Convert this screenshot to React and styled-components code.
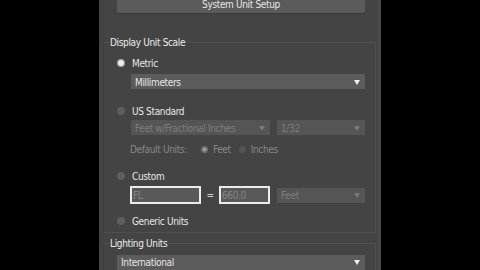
import React from "react";
import styled, { createGlobalStyle } from "styled-components";

const Global = createGlobalStyle`
  html, body { margin: 0; padding: 0; background: #000; }
  body { width: 480px; height: 270px; overflow: hidden; }
`;

const Panel = styled.div`
  margin-left: 99px;
  width: 278px;
  height: 270px;
  background: #444444;
  border-right: 4px solid #4a4a4a;
  font-family: "DejaVu Sans Condensed", "Liberation Sans", Arial, sans-serif;
  font-size: 10px;
  letter-spacing: -0.35px;
  color: #e6e6e6;
  overflow: hidden;
`;

const TopButton = styled.div`
  margin-left: 18px;
  width: 248px;
  height: 13px;
  background: #5b5b5b;
  border-radius: 0 0 2px 2px;
  box-shadow: 0 1px 0 #3a3a3a;
  display: flex;
  align-items: flex-start;
  justify-content: center;
  line-height: 9px;
  box-sizing: border-box;
`;

const Group = styled.fieldset`
  margin: ${(p) => p.$top}px 0 0 4px;
  width: 273px;
  box-sizing: border-box;
  border: 1px solid #4f4f4f;
  border-left-color: #3d3d3d;
  padding: 0 0 ${(p) => p.$bottom}px 13px;
  min-width: 0;
`;

const Legend = styled.legend`
  padding: 0 1px;
  margin-left: -8px;
  height: 12px;
  line-height: 13px;
  color: #ececec;
`;

const Row = styled.div`
  display: flex;
  align-items: center;
  height: ${(p) => p.$h || 12}px;
  margin-top: ${(p) => p.$top}px;
  padding-left: ${(p) => p.$indent || 0}px;
  gap: ${(p) => p.$gap || 0}px;
`;

const Radio = styled.span`
  width: ${(p) => (p.$small ? 7 : 8)}px;
  height: ${(p) => (p.$small ? 7 : 8)}px;
  border-radius: 50%;
  flex: none;
  box-sizing: border-box;
  background: ${(p) =>
    p.$on
      ? p.$dim
        ? "radial-gradient(circle, #9a9a9a 0 35%, #6e6e6e 45%)"
        : "radial-gradient(circle, #f2f2f2 0 40%, #a9a9a9 55%)"
      : p.$dim
      ? "#545454"
      : "#5e5e5e"};
  margin-right: ${(p) => p.$gap || 7}px;
`;

const Label = styled.span`
  color: ${(p) => (p.$dim ? "#878787" : "#e6e6e6")};
  white-space: nowrap;
  padding-top: 1px;
  margin-right: ${(p) => p.$after || 0}px;
`;

const Select = styled.div`
  display: flex;
  align-items: center;
  justify-content: space-between;
  width: ${(p) => p.$w}px;
  height: ${(p) => p.$h || 15}px;
  background: ${(p) => (p.$dim ? "#555555" : "#5c5c5c")};
  color: ${(p) => (p.$dim ? "#7d7d7d" : "#e6e6e6")};
  padding: 1px 5px 0 4px;
  box-sizing: border-box;
  flex: none;
`;

const Arrow = styled.span`
  width: 0;
  height: 0;
  border-left: 3.5px solid transparent;
  border-right: 3.5px solid transparent;
  border-top: 5px solid ${(p) => (p.$dim ? "#7a7a7a" : "#f0f0f0")};
`;

const Field = styled.div`
  width: ${(p) => p.$w}px;
  height: 18px;
  border: 2px solid #ececec;
  background: #595959;
  color: #858585;
  box-sizing: border-box;
  display: flex;
  align-items: center;
  padding-left: 1px;
  flex: none;
`;

const Equals = styled.span`
  width: 18px;
  text-align: center;
  color: #cfcfcf;
  flex: none;
`;

const Spacer = styled.span`
  width: ${(p) => p.$w}px;
  flex: none;
`;

const Dropdown = ({ w, dim, children }) => (
  <Select $w={w} $dim={dim}>
    <span>{children}</span>
    <Arrow $dim={dim} />
  </Select>
);

export default function App() {
  return (
    <>
      <Global />
      <Panel>
        <TopButton>System Unit Setup</TopButton>

        <Group $top={23} $bottom={5}>
          <Legend>Display Unit Scale</Legend>
          <Row $top={9}>
            <Radio $on />
            <Label>Metric</Label>
          </Row>
          <Row $top={5} $h={15} $indent={14}>
            <Dropdown w={234}>Millimeters</Dropdown>
          </Row>
          <Row $top={16}>
            <Radio />
            <Label>US Standard</Label>
          </Row>
          <Row $top={3} $h={15} $indent={14} $gap={7}>
            <Dropdown w={139} dim>Feet w/Fractional Inches</Dropdown>
            <Dropdown w={88} dim>1/32</Dropdown>
          </Row>
          <Row $top={8} $indent={13}>
            <Label $dim $after={14}>Default Units:</Label>
            <Radio $on $dim $small $gap={5} />
            <Label $dim $after={8}>Feet</Label>
            <Radio $dim $small $gap={5} />
            <Label $dim>Inches</Label>
          </Row>
          <Row $top={15}>
            <Radio />
            <Label>Custom</Label>
          </Row>
          <Row $top={4} $h={18} $indent={13}>
            <Field $w={71}>FL</Field>
            <Equals>=</Equals>
            <Field $w={51}>660.0</Field>
            <Spacer $w={7} />
            <Dropdown w={88} dim>Feet</Dropdown>
          </Row>
          <Row $top={11}>
            <Radio />
            <Label>Generic Units</Label>
          </Row>
        </Group>

        <Group $top={4} $bottom={5}>
          <Legend>Lighting Units</Legend>
          <Row $top={5} $h={16}>
            <Dropdown w={248}>International</Dropdown>
          </Row>
        </Group>
      </Panel>
    </>
  );
}
